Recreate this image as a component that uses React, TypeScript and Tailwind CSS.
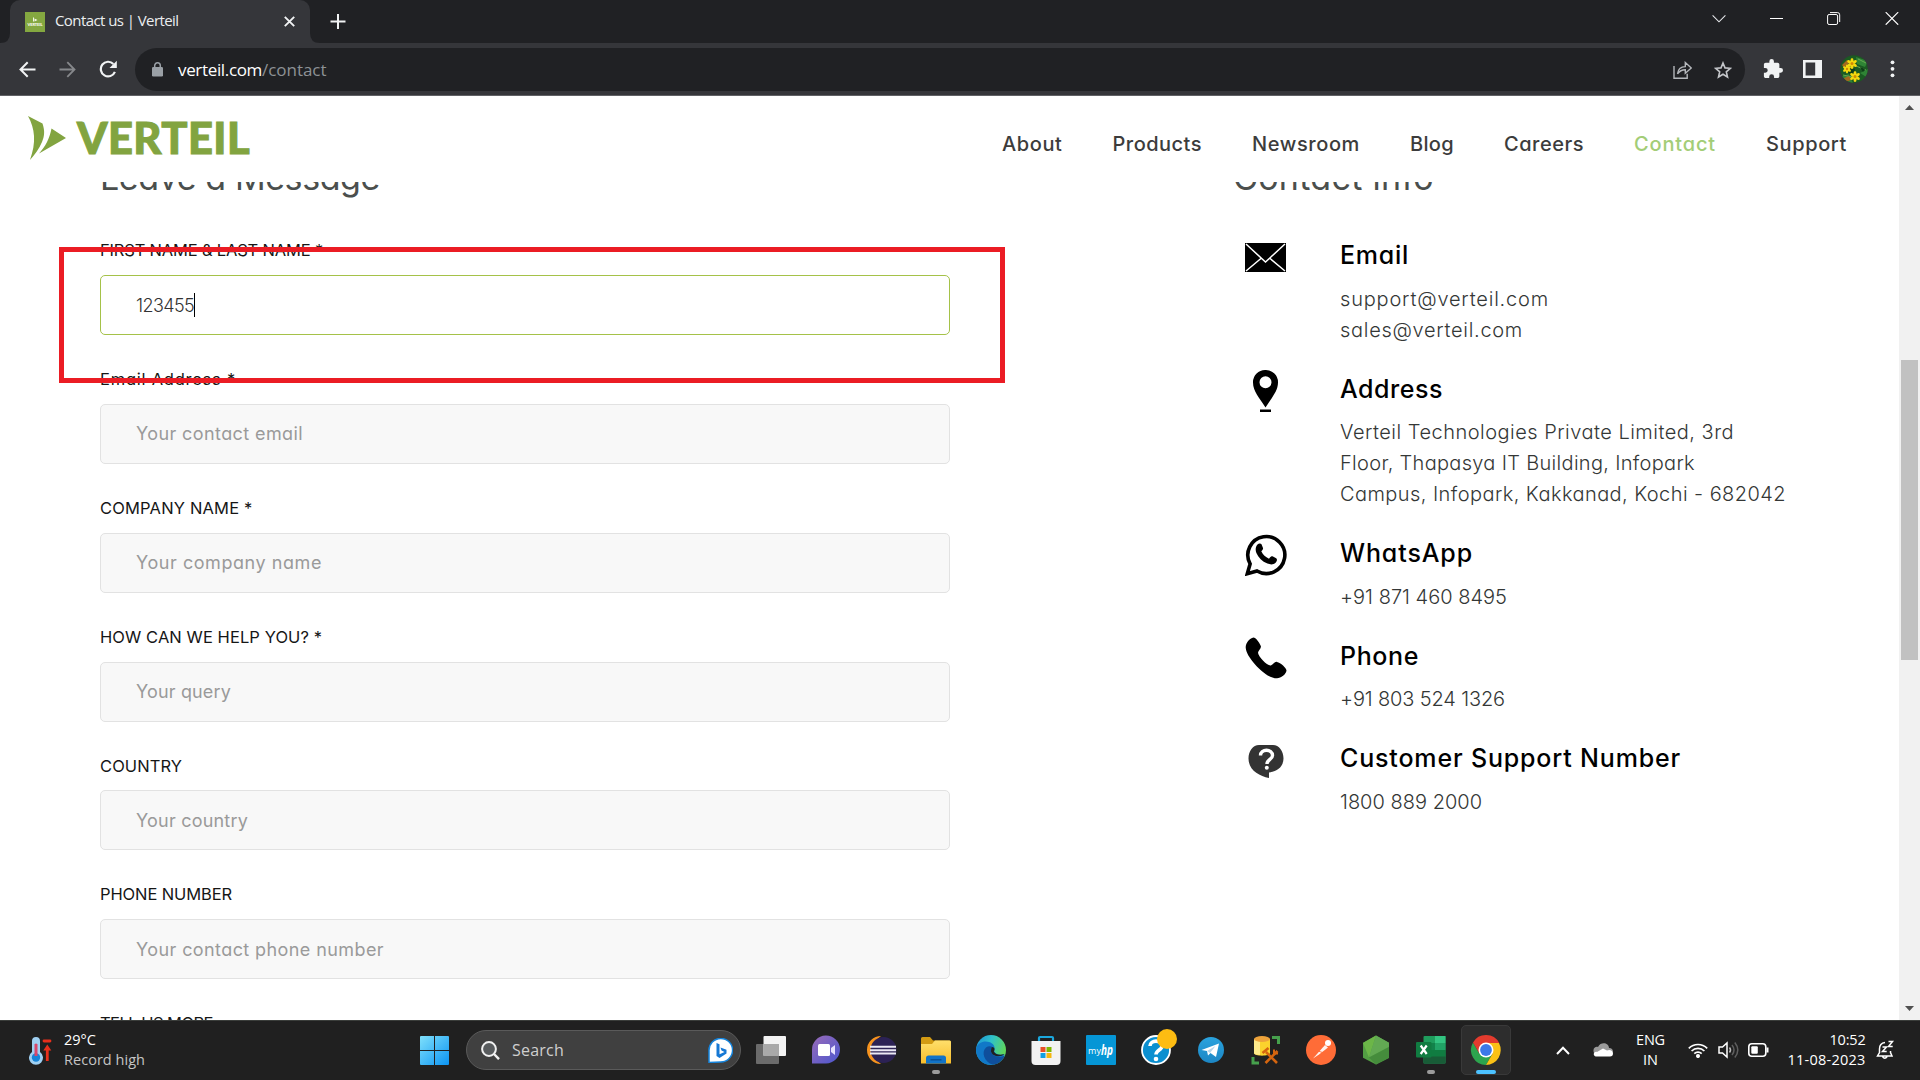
import { useLayoutEffect, useRef, useState } from "react";
import type { ReactNode } from "react";

const GEO = "font-['Inter',sans-serif] [font-feature-settings:'cv11']";
const UI = "font-['Open_Sans','Noto_Sans',sans-serif]";

/** Single-line text whose tracking is adjusted so that it spans `w` pixels. */
function Fit({ w, children, className = "" }: { w: number; children: string; className?: string }) {
  const ref = useRef<HTMLSpanElement>(null);
  const [ls, setLs] = useState(0);
  useLayoutEffect(() => {
    const el = ref.current;
    if (!el) return;
    el.style.letterSpacing = "0px";
    setLs((w - el.getBoundingClientRect().width) / children.length);
    el.style.letterSpacing = "";
  }, [w, children]);
  return (
    <span ref={ref} className={`inline-block whitespace-pre ${className}`} style={{ letterSpacing: `${ls}px` }}>
      {children}
    </span>
  );
}

function TabStrip() {
  return (
    <div className="flex h-[43px] shrink-0 items-start bg-[#202124]">
      <svg className="h-[43px] w-[10px]" viewBox="0 0 10 43"><path d="M0 43q10 0 10-10v10z" fill="#35363a" /></svg>
      <div className="flex h-[43px] w-[300px] items-center rounded-t-[10px] bg-[#35363a] pl-[15px]">
        <svg width="20" height="20" viewBox="0 0 20 20">
          <rect width="20" height="20" fill="#84a840" />
          <path d="M8 5l1 1v3l-1 1zM9.500 6.500l3 1.500-3 1.500z" fill="#f4f8e8" />
          <text x="2.500" y="14" fontSize="4" fontWeight="800" textLength="15" fill="#f4f8e8" fontFamily="Lato">VERTEIL</text>
        </svg>
        <Fit w={123.5} className={`${UI} mb-[3px] ml-[10px] text-[15px] leading-5 text-[#eceef0]`}>Contact us | Verteil</Fit>
        <svg className="ml-auto mr-[15px]" width="11" height="11" viewBox="0 0 11 11"><path d="M.8.8l9.400 9.400M10.200.8L.8 10.200" stroke="#f1f3f4" strokeWidth="1.900" /></svg>
      </div>
      <svg className="h-[43px] w-[10px]" viewBox="0 0 10 43"><path d="M10 43q-10 0-10-10v10z" fill="#35363a" /></svg>
      <svg className="ml-[9.500px] mt-[14px]" width="16" height="15" viewBox="0 0 16 15"><path d="M8 0v15M.5 7.500h15" stroke="#f1f3f4" strokeWidth="2" /></svg>
      <div className="ml-auto flex items-center pt-[12px]">
        <svg className="mr-[44px]" width="14" height="13" viewBox="0 0 14 13"><path d="M.6 3.400l6.400 6.400 6.400-6.400" fill="none" stroke="#e8eaed" strokeWidth="1.100" /></svg>
        <svg className="mr-[43px]" width="14" height="13" viewBox="0 0 14 13"><path d="M0 6.500h13" stroke="#fff" strokeWidth="1" /></svg>
        <svg className="mr-[44px]" width="14" height="13" viewBox="0 0 14 13"><rect x=".6" y="2.500" width="10" height="10" rx="1.500" fill="none" stroke="#fff" /><path d="M3 .6h7.500a2.200 2.200 0 012.200 2.200V10" fill="none" stroke="#fff" /></svg>
        <svg className="mr-[21px]" width="14" height="13" viewBox="0 0 14 13"><path d="M.7.2l12.500 12.500M13.200.2L.7 12.700" stroke="#fff" strokeWidth="1.200" /></svg>
      </div>
    </div>
  );
}

function Avatar() {
  const flower = (x: number, y: number, s: number) => (
    <g transform={`translate(${x} ${y}) scale(${s})`}>
      {[0, 60, 120, 180, 240, 300].map((a) => (
        <ellipse key={a} cx="0" cy="-2.900" rx="1.500" ry="2.600" fill="#f6d90f" transform={`rotate(${a})`} />
      ))}
      <circle r="1.500" fill="#cf8a05" />
    </g>
  );
  return (
    <svg width="28" height="28" viewBox="0 0 28 28">
      <clipPath id="av"><circle cx="14" cy="14" r="13.700" /></clipPath>
      <g clipPath="url(#av)">
        <rect width="28" height="28" fill="#1b5a22" />
        <path d="M0 22l9-3 4 9H2zM16 2l12 4-3 6-8-3zM20 18l8-4v9z" fill="#2f8435" />
        <path d="M16 11l10 4M18 4l8 4M3 20l9 2M6 25l8-6" stroke="#6fae55" strokeWidth=".9" />
        <path d="M2 10l5-5 2 3-5 5zM4 23l5-2 2 4-5 2z" fill="#a5691d" />
        <path d="M9 12l6 2-2 7-5-4zM20 12l5 2-2 3z" fill="#0d3c17" />
        {flower(12, 8.5, 1)}
        {flower(7, 14, 0.8)}
        {flower(15, 21.5, 1)}
      </g>
    </svg>
  );
}

function Toolbar() {
  return (
    <div className="flex h-[53px] shrink-0 items-center border-b border-[#606165] bg-[#35363a]">
      <div className="flex w-[135px] shrink-0 items-center pl-[19px]">
        <svg width="17" height="17" viewBox="0 0 17 17" fill="none" stroke="#f1f3f4" strokeWidth="2"><path d="M16.500 8.500H1.800M8.700 1.200L1.500 8.500l7.200 7.300" /></svg>
        <svg className="ml-[23px]" width="17" height="17" viewBox="0 0 17 17" fill="none" stroke="#86888b" strokeWidth="1.800"><path d="M.5 8.500h14.700M8.300 1.200l7.200 7.300-7.200 7.300" /></svg>
        <svg className="ml-[23px]" width="19" height="18" viewBox="0 0 19 18"><path d="M15.900 11.800A7.300 7.300 0 1114.400 4" fill="none" stroke="#f1f3f4" strokeWidth="2.200" /><path d="M17.800.8v7.300h-7.300z" fill="#f1f3f4" /></svg>
      </div>
      <div className="flex h-[43px] w-[1610px] shrink-0 items-center rounded-full bg-[#202124] pl-[17px] pt-px">
        <svg width="11" height="15" viewBox="0 0 11 15"><rect y="5" width="11" height="9.500" rx="1.300" fill="#9aa0a6" /><path d="M2.700 6V3.600a2.800 2.800 0 015.600 0V6" fill="none" stroke="#9aa0a6" strokeWidth="1.500" /></svg>
        <div className={`${UI} ml-[15px] text-[17px] leading-6`}>
          <Fit w={84} className="text-white">verteil.com</Fit>
          <Fit w={64.5} className="text-[#8d9195]">/contact</Fit>
        </div>
        <div className="ml-auto mr-[13px] flex items-center">
          <svg className="mr-[22px]" width="19" height="18" viewBox="0 0 19 18" fill="none" stroke="#b4b7bb" strokeWidth="1.400"><path d="M1 5v12.200h13.200v-4.500M4.500 12.800C5 8.500 8 5.700 12.300 5.600V1.500l6 5.500-6 5.300V8.700c-3.300 0-5.800 1.300-7.800 4.100z" /></svg>
          <svg width="18" height="18" viewBox="0 0 18 18" fill="none" stroke="#c3c5c9" strokeWidth="1.600"><path d="M9 2l2 4.900 5.300.4-4 3.500 1.200 5.200L9 13.200 4.500 16l1.200-5.200-4-3.500L7 6.900z" /></svg>
        </div>
      </div>
      <div className="flex flex-1 items-center">
        <svg className="ml-[18px]" width="20" height="20" viewBox="1 1 22 22" fill="#f1f3f4"><path d="M20.500 11H19V7c0-1.100-.9-2-2-2h-4V3.500a2.500 2.500 0 00-5 0V5H4c-1.100 0-2 .9-2 2v3.800h1.500a2.700 2.700 0 010 5.400H2V20c0 1.100.9 2 2 2h3.800v-1.500a2.700 2.700 0 015.400 0V22H17c1.100 0 2-.9 2-2v-4h1.500a2.500 2.500 0 000-5z" /></svg>
        <svg className="ml-[20px]" width="19" height="18" viewBox="0 0 19 18"><path fillRule="evenodd" d="M0 0h19v18H0zM2.600 2.600v12.800h9.600V2.600z" fill="#f1f3f4" /></svg>
        <div className="ml-[18px]"><Avatar /></div>
        <svg className="ml-[22px]" width="5" height="18" viewBox="0 0 5 18" fill="#f1f3f4"><circle cx="2.500" cy="2.300" r="1.900" /><circle cx="2.500" cy="8.800" r="1.900" /><circle cx="2.500" cy="15.300" r="1.900" /></svg>
      </div>
    </div>
  );
}

const NAV: [string, number][] = [
  ["About", 60.5], ["Products", 89.5], ["Newsroom", 108], ["Blog", 44], ["Careers", 80], ["Contact", 82], ["Support", 81],
];

function SiteHeader() {
  return (
    <header className="flex h-[86px] shrink-0 bg-white">
      <div className="flex w-[260px] items-start pl-[28px] pt-[20px]">
        <svg width="38" height="44" viewBox="0 0 38 44" fill="#82a440"><path d="M0 0l14.500 7.500C17 15 16.500 20 14 26 11 33 7 38.500 2 44c3-9 4.500-16 4-24C5.600 13 3.500 6 0 0z" /><path d="M23.500 12.500L38 22 11 37.500c6.500-7 10.500-15 12.500-25z" /></svg>
        <Fit w={173} className="ml-[11px] mt-[-1px] font-['Lato'] text-[43.500px] font-black leading-[44px] text-[#82a440] [-webkit-text-stroke:1px_#82a440]">VERTEIL</Fit>
      </div>
      <nav className={`${GEO} ml-auto mr-[52px] flex gap-[50px] pt-[35px] text-[20px] font-medium leading-[26px]`}>
        {NAV.map(([t, w]) => (
          <Fit key={t} w={w} className={t === "Contact" ? "text-[#a3cd77]" : "text-[#3c3c3c]"}>{t}</Fit>
        ))}
      </nav>
    </header>
  );
}

type Field = { label: string; lw: number; text: string; tw: number; focus?: boolean };
const FIELDS: Field[] = [
  { label: "FIRST NAME & LAST NAME *", lw: 223, text: "123455", tw: 58, focus: true },
  { label: "Email Address *", lw: 136, text: "Your contact email", tw: 167 },
  { label: "COMPANY NAME *", lw: 152.5, text: "Your company name", tw: 186 },
  { label: "HOW CAN WE HELP YOU? *", lw: 222, text: "Your query", tw: 95 },
  { label: "COUNTRY", lw: 82, text: "Your country", tw: 112 },
  { label: "PHONE NUMBER", lw: 132, text: "Your contact phone number", tw: 248 },
];

function MessageForm() {
  return (
    <section className="w-[850px]">
      <h2 className="mt-[-24px] text-[34px] leading-[40px] text-[#4b4f4d]"><Fit w={280}>Leave a Message</Fit></h2>
      <div className="pt-[41.400px]">
        {FIELDS.map((f) => (
          <div key={f.label} className="h-[128.800px]">
            <div className="h-[35.800px] text-[16.500px] leading-[22px] text-[#161616]"><Fit w={f.lw}>{f.label}</Fit></div>
            <div className={`flex h-[60px] items-center rounded-[5px] border pl-[35px] text-[18px] ${f.focus ? "border-[#a5c249] bg-white text-[#333] font-light" : "border-[#e2e2e2] bg-[#f8f8f8] text-[#9a9a9a]"}`}>
              <Fit w={f.tw}>{f.text}</Fit>
              {f.focus && <span className="h-[24px] w-px bg-black" />}
            </div>
          </div>
        ))}
        <div className="text-[16.500px] leading-[22px] text-[#161616]"><Fit w={113}>TELL US MORE</Fit></div>
      </div>
    </section>
  );
}

function Info({ icon, title, tw, lines }: { icon: ReactNode; title: string; tw: number; lines: [string, number][] }) {
  return (
    <div className="flex pb-[22px]">
      <div className="flex h-[46px] w-[65px] shrink-0 items-center justify-center">{icon}</div>
      <div className="pl-[42px] pt-[4px]">
        <div className="flex h-[45.500px] text-[25px] font-medium leading-[34px] text-black"><Fit w={tw}>{title}</Fit></div>
        {lines.map(([t, w]) => (
          <div key={t} className="h-[31px] text-[20px] font-light leading-[31px] text-[#343736]"><Fit w={w}>{t}</Fit></div>
        ))}
      </div>
    </div>
  );
}

const WA_PHONE = "M12.500 10.500c1-1.200 3.200-1.600 4-.2l1.500 3.800c.3 1-.3 1.900-1.700 3.200 1.700 3.400 4.200 5.900 7.700 7.400 1.200-1.500 2.200-3 3.500-2.400l3.700 1.900c1.300.8.800 3.400-.6 4.600-2.200 2-5 2-8.200.8-5.300-2-9-6-11-10.600-1.300-3.100-.8-6.300 1.100-8.500z";

function ContactInfo() {
  return (
    <section className="ml-[283px] w-[620px]">
      <h2 className="mt-[-24px] text-[34px] leading-[40px] text-[#4b4f4d]"><Fit w={201}>Contact info</Fit></h2>
      <div className="pt-[36px]">
        <Info
          icon={<svg width="41" height="29" viewBox="0 0 41 29"><rect width="41" height="29" fill="#000" /><path d="M1 1l19.500 18L40 1M1 28l15.500-13M40 28L24.500 15" fill="none" stroke="#fff" strokeWidth="1.500" /></svg>}
          title="Email" tw={69} lines={[["support@verteil.com", 209], ["sales@verteil.com", 183]]}
        />
        <Info
          icon={<svg width="25" height="42" viewBox="0 0 25 42"><path fillRule="evenodd" d="M12.500 0A12.300 12.300 0 0125 12.500C25 21 18.500 28 12.500 37.500 6.500 28 0 21 0 12.500A12.300 12.300 0 0112.500 0zm0 6.300a6 6 0 100 12 6 6 0 000-12zM7 39.500h11V42H7z" /></svg>}
          title="Address" tw={103}
          lines={[["Verteil Technologies Private Limited, 3rd", 394], ["Floor, Thapasya IT Building, Infopark", 355], ["Campus, Infopark, Kakkanad, Kochi - 682042", 446]]}
        />
        <Info
          icon={<svg width="42" height="42" viewBox="0 0 42 42"><path d="M2.300 39.700l2.800-9.800A18.500 18.500 0 1112 37z" fill="none" stroke="#000" strokeWidth="3.600" /><path d={WA_PHONE} /></svg>}
          title="WhatsApp" tw={133} lines={[["+91 871 460 8495", 167]]}
        />
        <Info
          icon={<svg width="42" height="42" viewBox="0 0 42 42"><path d="M8.500.5c2.200 0 5.500 4.500 7.200 8.200 1.200 2.800-2.500 4.800-2.700 7 .6 4 8.500 12.400 12.500 12.800 2.200 0 3.800-4 6.500-3.600C35.500 25.500 41.500 31 41.500 33.500c-.5 4-5.500 7.500-9.500 7.800C22 42.500 1 21 .7 10.500.5 6.500 4.500 1 8.500.5z" /></svg>}
          title="Phone" tw={79} lines={[["+91 803 524 1326", 165]]}
        />
        <Info
          icon={<svg className="mt-[4px]" width="36" height="34" viewBox="0 0 36 34"><path d="M11 0h14c6 0 10.500 6 10.500 13.500S30 26.500 21 27.500V33C11 31 .5 25 .5 13.500.5 6 5 0 11 0z" fill="#333" /><path d="M12.500 10.500c0-7 12-7 12 0 0 4-5.500 4-5.500 8.500" fill="none" stroke="#fff" strokeWidth="3.400" /><circle cx="18.800" cy="22.800" r="2" fill="#fff" /></svg>}
          title="Customer Support Number" tw={341} lines={[["1800 889 2000", 142]]}
        />
      </div>
    </section>
  );
}

function Scrollbar() {
  return (
    <div className="flex w-[21px] shrink-0 flex-col items-center bg-[#f1f1f1]">
      <svg className="mt-[9px]" width="9" height="5" viewBox="0 0 9 5"><path d="M0 5l4.500-5L9 5z" fill="#505050" /></svg>
      <div className="mt-[250px] h-[300px] w-[17px] bg-[#c1c1c1]" />
      <svg className="mb-[9px] mt-auto" width="9" height="5" viewBox="0 0 9 5"><path d="M0 0h9L4.500 5z" fill="#505050" /></svg>
    </div>
  );
}

const TASKS: { icon: ReactNode; run?: boolean; active?: boolean }[] = [
  { icon: <g><rect y="9" width="23" height="20" rx="1" fill="#6b6b6b" /><rect x="7.500" y="1" width="22.500" height="20" rx="1" fill="#f3f3f3" /><path d="M7.500 9H23v12H7.500z" fill="#a9a9a9" /></g> },
  { icon: <g><path d="M1 28.500V15a14 14 0 1114 13.500z" fill="url(#chat)" /><rect x="7" y="9" width="12" height="12" rx="1.500" fill="#fff" /><path d="M20 13l4-3v10l-4-3z" fill="#e6e2ff" /></g> },
  { icon: <g><path d="M15 1a14 14 0 000 28 17 17 0 010-28z" fill="#f7941e" /><circle cx="17.500" cy="15" r="13" fill="#2c2255" /><path d="M4 11.800h26M4 15.200h26M4 18.600h26" stroke="#eceaf5" strokeWidth="2" /></g> },
  { icon: <g><path d="M0 3.500Q0 2 1.500 2H9l3 3.500h16.500Q30 5.500 30 7v6H0z" fill="#d39b13" /><path d="M0 9h11l3-3.500h14.500Q30 5.500 30 7v21.500H0z" fill="url(#fold)" /><path d="M5 28.500V23q0-2.500 2.500-2.500h15Q25 20.500 25 23v5.500z" fill="#1173c7" /><path d="M9.500 24.800h11" stroke="#0a4f92" strokeWidth="1.400" /></g>, run: true },
  { icon: <g><circle cx="15" cy="15" r="15" fill="url(#edge)" /><path d="M0 14C2 6 11 5 16 8.500c3 2.200 3 5 2 7.500 2 4 7 4.500 10.500 3A15 15 0 0115 30C7 30 0 24 0 14z" fill="#1178c8" /><path d="M10 12.500C5 17 8 27 17 29.800 23 29 27 25 29 20.500c-5 2.600-13 1.500-14-4.500.3-2 1-3 1.500-4-2-1.300-4.500-1-6.500.5z" fill="#0f4f9c" /><path d="M16 12c3 0 3 3 1.800 4.500 2 3.500 6.500 4 10.500 2.500-3 3.500-12 3-13.300-2.500 0-2 .4-3.500 1-4.500z" fill="#202020" /></g> },
  { icon: <g><path d="M8 7V3q0-1 1-1h12q1 0 1 1v4" fill="none" stroke="#1aa7dc" strokeWidth="2.200" /><path d="M.5 6h29v20q0 4-4 4h-21q-4 0-4-4z" fill="#f2f2f2" /><path d="M9.500 12h5v5h-5z" fill="#e94f26" /><path d="M15.500 12h5v5h-5z" fill="#7fb900" /><path d="M9.500 18h5v5h-5z" fill="#109fe3" /><path d="M15.500 18h5v5h-5z" fill="#f5b70f" /></g> },
  { icon: <g><rect width="30" height="30" rx="1" fill="#0596d6" /><text x="2" y="18.500" fontFamily="Open Sans" fontSize="9" fill="#fff" textLength="13">my</text><text x="15" y="20" fontFamily="Open Sans" fontSize="15" fontWeight="700" fontStyle="italic" fill="#fff" textLength="12" lengthAdjust="spacingAndGlyphs">hp</text></g> },
  { icon: <g><circle cx="15" cy="15" r="14" fill="#0b8fd0" stroke="#fff" strokeWidth="1.800" /><path d="M9 11c0-6.500 12-6.500 12 0 0 4-6 4-6 8.500" fill="none" stroke="#fff" strokeWidth="3.600" /><circle cx="15" cy="24" r="2.300" fill="#fff" /><circle cx="26" cy="4" r="10" fill="#fdbc12" /></g> },
  { icon: <g><circle cx="15" cy="15" r="13" fill="url(#tg)" /><path d="M5.500 15L23 8.500 20 22l-5.500-4-2.500 2.500-1-4.500z" fill="#fff" /><path d="M11 16l8.500-5-5.500 7z" fill="#b8d6ea" /></g> },
  { icon: <g><path d="M3 4v14c0 3.500 16 3.500 16 0V4z" fill="#fbd22d" /><path d="M3 4h6v16c-4 0-6-1-6-2z" fill="#fde98a" /><ellipse cx="11" cy="4" rx="8" ry="3" fill="#eda33b" /><path d="M21 2.500h6.500V9M2 22v6h6" fill="none" stroke="#46a04c" strokeWidth="3" /><path d="M14.500 28l12-12M26 28L15 17M11.500 18l6-5" stroke="#d5650f" strokeWidth="2.600" /><path d="M23 14.500v4h4" fill="none" stroke="#d5650f" strokeWidth="2" /></g> },
  { icon: <g><circle cx="15" cy="15" r="15" fill="#ff6c37" /><path d="M7 23.500L19 10l3 2.500-9 7z" fill="#fff" opacity=".92" /><circle cx="22" cy="8" r="3" fill="#fff" /><path d="M12 16l6 2" stroke="#ff6c37" strokeWidth=".9" /></g> },
  { icon: <g><path d="M15 .5l13 7.300v15L15 29.500 2 22.800v-15z" fill="#539e43" /><path d="M15 .5l-7 22L2 8z" fill="#6cb648" /><path d="M15 .5l13 7.300v4L8 22.500z" fill="#62a953" /><path d="M8 22.500L28 12v11l-13 6.500z" fill="#458c3c" /></g> },
  { icon: <g><rect x="7.500" y="1" width="22" height="27.500" rx="1" fill="#1f9d5d" /><path d="M19 1h10.500v7H19z" fill="#33c481" /><path d="M7.500 8H19v7H7.500z" fill="#12824a" /><path d="M19 8h10.500v7H19z" fill="#21a366" /><path d="M7.500 15h22v7h-22z" fill="#107c41" /><path d="M7.500 21.500h22v7h-22z" fill="#185c37" /><rect y="7" width="15.500" height="15.500" rx="1" fill="#107c41" /><path d="M4.700 10.500l6 8.500M10.700 10.500l-6 8.500" stroke="#fff" strokeWidth="2.200" /></g>, run: true },
  { icon: <g><path d="M2 7.500A15 15 0 0015 30l6.500-11.300-6.500 3-6.500-3z" fill="#2da44e" /><path d="M15 8h13a15 15 0 01-13 22l6.500-11.300z" fill="#fbc116" /><path d="M15 8h13.200A15 15 0 002 7.500L8.500 18.700z" fill="#e33b2e" /><circle cx="15" cy="15" r="7.500" fill="#fff" /><circle cx="15" cy="15" r="5.900" fill="#3b78e7" /></g>, active: true },
];

function Taskbar() {
  return (
    <div className="flex h-[60px] shrink-0 items-center border-t border-[#3a3d3a] bg-[#202020] pb-px">
      <svg width="0" height="0">
        <defs>
          <linearGradient id="chat" x2="1" y2="1"><stop stopColor="#9a6bb8" /><stop offset="1" stopColor="#4a56cf" /></linearGradient>
          <linearGradient id="fold" x2="0" y2="1"><stop stopColor="#ffdf6b" /><stop offset="1" stopColor="#f7bd2c" /></linearGradient>
          <linearGradient id="edge" x2="1" y2=".4"><stop stopColor="#1a8fd8" /><stop offset=".5" stopColor="#2fc1c9" /><stop offset="1" stopColor="#5fd65c" /></linearGradient>
          <linearGradient id="tg" x2="0" y2="1"><stop stopColor="#2aa3de" /><stop offset="1" stopColor="#1c86c4" /></linearGradient>
          <linearGradient id="win" x2="1" y2="1"><stop stopColor="#7fe0fb" /><stop offset="1" stopColor="#0c94f2" /></linearGradient>
        </defs>
      </svg>
      <div className="flex w-[420px] items-center pl-[29px]">
        <svg width="23" height="29" viewBox="0 0 23 29"><path d="M3 5a4 4 0 018 0v11a7 7 0 11-8 0z" fill="#9fd0f2" /><circle cx="7" cy="21.500" r="4.200" fill="#1684d8" /><path d="M5.500 8.500q1.500-2 3 0V20h-3z" fill="#d8476b" /><path d="M15 5h6" stroke="#e8301c" strokeWidth="2.800" strokeLinecap="round" /><path d="M18.300 8.500l4 6h-2.600V25h-2.800V14.500h-2.600z" fill="#e8301c" /></svg>
        <div className={`${UI} ml-[12px] flex flex-col items-start text-[14.500px] leading-5`}>
          <Fit w={32} className="text-white">29°C</Fit>
          <Fit w={81} className="text-[#c5c5c5]">Record high</Fit>
        </div>
      </div>
      <svg width="29" height="29" viewBox="0 0 29 29" fill="url(#win)"><path d="M1 0h13v14H0V1q0-1 1-1zM15 0h13q1 0 1 1v13H15zM0 15h14v14H1q-1 0-1-1zM15 15h14v13q0 1-1 1H15z" /></svg>
      <div className="ml-[17px] flex h-[40px] w-[275px] items-center rounded-full border border-[#5a5a5a] bg-[#404040] pl-[14px]">
        <svg width="19" height="19" viewBox="0 0 19 19" fill="#585b5d" stroke="#f1f1f1" strokeWidth="2"><circle cx="8" cy="8" r="6.900" /><path d="M13 13l5 5.200" strokeWidth="2.400" /></svg>
        <Fit w={52} className={`${UI} ml-[12px] text-[16px] leading-6 text-[#cfcfcf]`}>Search</Fit>
        <svg className="ml-auto mr-[7px]" width="25" height="25" viewBox="0 0 25 25"><path d="M1 24.500V12.500A11.800 11.800 0 1112.800 24z" fill="#fff" stroke="#1584dc" strokeWidth="1.500" /><path d="M8.500 5l3 1.200v10l5-2.200-3-1.500-1-3 6 2.300v3.700L11.500 20l-3-2z" fill="#1678d4" /></svg>
      </div>
      <div className="ml-[2.500px] flex">
        {TASKS.map((t, i) => (
          <div key={i} className="flex w-[55px] justify-center">
            <div className={`relative flex h-[50px] w-[50px] items-center justify-center rounded-[5px] ${t.active ? "border border-[#393939] bg-[#2d2d2d]" : ""}`}>
              <svg className="overflow-visible" width="30" height="30" viewBox="0 0 30 30">{t.icon}</svg>
              {t.run && <span className="absolute bottom-px h-1 w-2 rounded-full bg-[#9b9b9b]" />}
              {t.active && <span className="absolute bottom-0 h-1 w-5 rounded-full bg-[#4cc2ff]" />}
            </div>
          </div>
        ))}
      </div>
      <div className="ml-[42px] flex flex-1 items-center">
        <svg width="14" height="9" viewBox="0 0 14 9"><path d="M1 8l6-6.200L13 8" fill="none" stroke="#fff" strokeWidth="2" /></svg>
        <svg className="ml-[23px]" width="20" height="14" viewBox="0 0 20 14"><path d="M1 10C-1 5 3 3 5 4c3-6 11-4 11 1 4 0 5 4 3 6z" fill="#9b9b9b" /><path d="M3 13.500C-1 12.500 1 8 4 9l6-3.500 4 2C17 6 20 8 20 10.500q0 3-3 3z" fill="#fff" /></svg>
        <div className={`${UI} ml-[24px] flex w-[28px] flex-col items-center text-[14.500px] leading-5 text-white`}><Fit w={29}>ENG</Fit><Fit w={15}>IN</Fit></div>
        <svg className="ml-[23px]" width="20" height="16" viewBox="0 0 20 16" fill="none" stroke="#fff" strokeWidth="1.700"><path d="M.8 6.300a13 13 0 0118.400 0M3.600 9a9 9 0 0112.800 0M6.300 11.600a5.300 5.300 0 017.400 0" /><circle cx="10" cy="14" r="1.200" fill="#fff" /></svg>
        <svg className="ml-[10px]" width="21" height="18" viewBox="0 0 21 18" fill="none" stroke="#fff" strokeWidth="1.500"><path d="M1 6h3.500L9 2v14l-4.500-4H1z" /><path d="M11.500 6.500q2 2.500 0 5" stroke="#bbb" /><path d="M14 4q4 5 0 10M16.800 1.500q6 7.500 0 15" stroke="#5e5e5e" /></svg>
        <svg className="ml-[9px]" width="21" height="14" viewBox="0 0 21 14"><rect x=".8" y=".8" width="17" height="12.400" rx="3" fill="none" stroke="#fff" strokeWidth="1.600" /><rect x="3.300" y="3.300" width="6.500" height="7.400" rx="1" fill="#fff" /><path d="M19.500 4.500v5" stroke="#fff" strokeWidth="2" /></svg>
        <div className={`${UI} ml-[19px] flex w-[78px] flex-col items-end text-[14.500px] leading-5 text-white`}><Fit w={36}>10:52</Fit><Fit w={78}>11-08-2023</Fit></div>
        <svg className="ml-[10px]" width="20" height="20" viewBox="0 0 20 20" fill="none" stroke="#fff" strokeWidth="1.500"><path d="M9 2.500C4.500 3 3.500 6 3.500 9v3.500L1.500 16h14.500l-1.500-3.500V11M6.500 16.500q2.300 3.500 4.600 0M6.500 7h4L6.500 11.500h4.200M12.500 1.500h4L12.500 6.500h4.200" /></svg>
      </div>
    </div>
  );
}

export default function App() {
  return (
    <div className="flex h-[1080px] w-[1920px] flex-col overflow-hidden bg-white">
      <TabStrip />
      <Toolbar />
      <div className={`${GEO} relative flex h-[924px] shrink-0`}>
        <div className="flex min-w-0 flex-1 flex-col">
          <SiteHeader />
          <main className="flex min-h-0 flex-1 overflow-hidden pl-[100px]">
            <MessageForm />
            <ContactInfo />
          </main>
        </div>
        <Scrollbar />
        <div className="absolute left-[59px] top-[151px] h-[136px] w-[946px] border-[5px] border-[#eb1c24]" />
      </div>
      <Taskbar />
    </div>
  );
}
